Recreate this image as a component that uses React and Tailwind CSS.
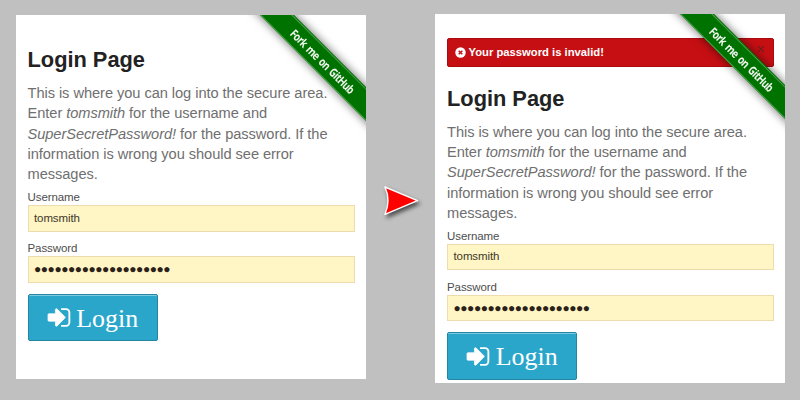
function SignInIcon() {
  return (
    <svg viewBox="0 0 1536 1792" className="h-[26px] w-[22.3px] shrink-0 overflow-visible fill-white">
      <path
        d="M1184 928q0 26-19 45l-544 544q-19 19-45 19t-45-19-19-45v-288h-448q-26 0-45-19t-19-45v-384q0-26 19-45t45-19h448v-288q0-26 19-45t45-19 45 19l544 544q19 19 19 45z"
        stroke="white"
        strokeWidth="50"
      />
      <path
        d="M1536 576v704q0 119-84.5 203.5t-203.5 84.5h-320q-13 0-22.5-9.5t-9.5-22.5q0-4-1-20t-.5-26.5 3-23.5 10-19.5 20.5-6.5h320q66 0 113-47t47-113v-704q0-66-47-113t-113-47h-312l-11.5-1-11.5-3-8-5.5-7-9-2-13.5q0-4-1-20t-.5-26.5 3-23.5 10-19.5 20.5-6.5h320q119 0 203.5 84.5t84.5 203.5z"
      />
    </svg>
  );
}

function Ribbon({ className }) {
  return (
    <div
      className={
        "absolute flex h-[24px] w-[240px] rotate-45 items-center justify-center bg-[#007200] shadow-[0_0_8px_1px_rgba(0,0,0,0.5)] " +
        className
      }
    >
      <div className="flex h-[23px] w-full items-center justify-center border-y border-[#4fa34f]">
        <span className="scale-x-[0.81] pt-[2px] pl-[2px] font-['Open_Sans',sans-serif] text-[11.8px] leading-none font-bold tracking-[-0.7px] [word-spacing:2px] whitespace-nowrap text-[#f0f8f0]">
          Fork me on GitHub
        </span>
      </div>
    </div>
  );
}

function Field({ label, children }) {
  return (
    <div className="mb-[10.5px]">
      <div className="h-[14px] text-[11.5px] leading-[12.6px] tracking-[-0.08px] text-[#4d4d4d]">{label}</div>
      <div className="flex h-[26.5px] items-center border border-[#eedcae] bg-[#fff5c5] px-[5.5px] text-[11.5px] tracking-[-0.1px] text-[#40382a]">
        {children}
      </div>
    </div>
  );
}

function LoginForm() {
  return (
    <div>
      <h2 className="text-[21.8px] leading-[31px] font-bold text-[#222]">Login Page</h2>
      <p className="mt-[8px] mb-[6.5px] text-[14.65px] leading-[20.35px] tracking-[-0.06px] text-[#6f6f6f]">
        This is where you can log into the secure area.
        <br />
        Enter <em>tomsmith</em> for the username and
        <br />
        <em>SuperSecretPassword!</em> for the password. If the
        <br />
        information is wrong you should see error
        <br />
        messages.
      </p>
      <Field label="Username">tomsmith</Field>
      <Field label="Password">
        <span className="text-[12px] tracking-[-0.44px] text-[#2a2118]">●●●●●●●●●●●●●●●●●●●●</span>
      </Field>
      <button className="mt-[11px] flex h-[47.5px] w-[130px] items-center rounded-[2px] border border-[#2285a2] bg-[#2ba6cb] pl-[19px] shadow-[inset_0_1px_0_rgba(255,255,255,0.4)]">
        <SignInIcon />
        <span className="mt-[3px] ml-[6.5px] font-['Liberation_Serif',serif] text-[25.9px] leading-[30px] text-white">
          Login
        </span>
      </button>
    </div>
  );
}

function Alert() {
  return (
    <div className="flex h-[29px] items-center rounded-[2px] border border-[#aa0b0f] bg-[#c60f13] pr-[8px] pl-[7px] text-white">
      <svg viewBox="0 0 12 12" className="size-[11px]">
        <circle cx="6" cy="6" r="5.7" fill="white" />
        <path d="M4 4L8 8M8 4L4 8" stroke="#c60f13" strokeWidth="1.6" />
      </svg>
      <span className="ml-[2.5px] text-[11.25px] leading-none font-bold">Your password is invalid!</span>
      <svg viewBox="0 0 8 8" className="mb-[7px] ml-auto size-[8px]">
        <path d="M1 1L7 7M7 1L1 7" stroke="#7d1c18" strokeWidth="1.3" />
      </svg>
    </div>
  );
}

export default function App() {
  return (
    <div className="flex h-[400px] w-[800px] items-start overflow-hidden bg-[#c0c0c0] font-['Liberation_Sans',Arial,sans-serif]">
      <section className="relative mt-[15px] ml-[16px] h-[364px] w-[350px] overflow-hidden bg-white px-[11.5px] pt-[29px]">
        <LoginForm />
        <Ribbon className="top-[33px] left-[185.5px]" />
      </section>
      <div className="mt-[182px] flex w-[69px] justify-center">
        <svg viewBox="0 0 50 44" className="h-[44px] w-[50px] overflow-visible">
          <path
            d="M9 5L41.5 18.7L9 32.3Q15 18.5 9 5Z"
            fill="#ff0000"
            stroke="white"
            strokeWidth="1.4"
            strokeLinejoin="round"
            className="drop-shadow-[2px_3px_2px_rgba(0,0,0,0.6)]"
          />
        </svg>
      </div>
      <section className="relative mt-[14px] h-[369px] w-[350px] overflow-hidden bg-white pt-[24px] pr-[11px] pl-[12px]">
        <Alert />
        <div className="mt-[15.5px]">
          <LoginForm />
        </div>
        <Ribbon className="top-[31.5px] left-[186px]" />
      </section>
    </div>
  );
}
